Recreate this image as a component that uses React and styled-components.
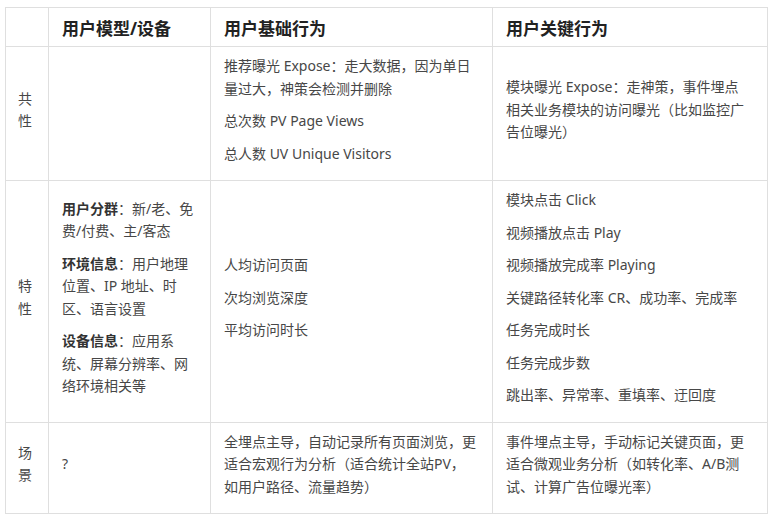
import React from "react";
import styled, { createGlobalStyle } from "styled-components";

const GlobalStyle = createGlobalStyle`
  html, body {
    margin: 0;
    padding: 0;
    background: #ffffff;
  }
  body {
    font-family: "Noto Sans", "Noto Sans CJK SC", sans-serif;
    color: #444444;
  }
`;

const Page = styled.div`
  padding: 7px 0 0 5px;
`;

const Table = styled.table`
  border-collapse: collapse;
  table-layout: fixed;
  width: 762px;
  font-size: 14px;
`;

const HeadCell = styled.th`
  border: 1px solid #dfdfdf;
  padding: 10px 13px 7px;
  font-size: 17px;
  line-height: 21px;
  font-weight: 700;
  color: #222222;
  text-align: left;
  vertical-align: middle;
`;

const Cell = styled.td`
  border: 1px solid #dfdfdf;
  padding: ${(p) => (p.$side ? "8px 8px 15px 12px" : "8px 10px 15px 13px")};
  vertical-align: middle;
  line-height: 22.5px;
  color: #474747;
`;

const Para = styled.p`
  margin: 0 0 10px;
  white-space: nowrap;

  &:last-child {
    margin-bottom: 0;
  }
`;

const Label = styled.b`
  font-weight: 700;
  color: #333333;
`;

const rows = [
  {
    side: ["共", "性"],
    model: [],
    basic: [
      ["推荐曝光 Expose：走大数据，因为单日", "量过大，神策会检测并删除"],
      ["总次数 PV Page Views"],
      ["总人数 UV Unique Visitors"],
    ],
    key: [["模块曝光 Expose：走神策，事件埋点", "相关业务模块的访问曝光（比如监控广", "告位曝光）"]],
  },
  {
    side: ["特", "性"],
    model: [
      { label: "用户分群", lines: ["：新/老、免", "费/付费、主/客态"] },
      { label: "环境信息", lines: ["：用户地理", "位置、IP 地址、时", "区、语言设置"] },
      { label: "设备信息", lines: ["：应用系", "统、屏幕分辨率、网", "络环境相关等"] },
    ],
    basic: [["人均访问页面"], ["次均浏览深度"], ["平均访问时长"]],
    key: [
      ["模块点击 Click"],
      ["视频播放点击 Play"],
      ["视频播放完成率 Playing"],
      ["关键路径转化率 CR、成功率、完成率"],
      ["任务完成时长"],
      ["任务完成步数"],
      ["跳出率、异常率、重填率、迂回度"],
    ],
  },
  {
    side: ["场", "景"],
    model: "?",
    basic: [["全埋点主导，自动记录所有页面浏览，更", "适合宏观行为分析（适合统计全站PV，", "如用户路径、流量趋势）"]],
    key: [["事件埋点主导，手动标记关键页面，更", "适合微观业务分析（如转化率、A/B测", "试、计算广告位曝光率）"]],
  },
];

const Lines = ({ lines }) =>
  lines.map((line, i) => (
    <React.Fragment key={i}>
      {i > 0 && <br />}
      {line}
    </React.Fragment>
  ));

const Paragraphs = ({ items }) =>
  items.map((lines, i) => (
    <Para key={i}>
      <Lines lines={lines} />
    </Para>
  ));

export default function App() {
  return (
    <Page>
      <GlobalStyle />
      <Table>
        <colgroup>
          <col style={{ width: "43px" }} />
          <col style={{ width: "162px" }} />
          <col style={{ width: "282px" }} />
          <col style={{ width: "275px" }} />
        </colgroup>
        <thead>
          <tr>
            <HeadCell />
            <HeadCell>用户模型/设备</HeadCell>
            <HeadCell>用户基础行为</HeadCell>
            <HeadCell>用户关键行为</HeadCell>
          </tr>
        </thead>
        <tbody>
          {rows.map((row, r) => (
            <tr key={r}>
              <Cell $side>
                <Lines lines={row.side} />
              </Cell>
              <Cell>
                {typeof row.model === "string"
                  ? row.model
                  : row.model.map((m, i) => (
                      <Para key={i}>
                        <Label>{m.label}</Label>
                        <Lines lines={m.lines} />
                      </Para>
                    ))}
              </Cell>
              <Cell>
                <Paragraphs items={row.basic} />
              </Cell>
              <Cell>
                <Paragraphs items={row.key} />
              </Cell>
            </tr>
          ))}
        </tbody>
      </Table>
    </Page>
  );
}
